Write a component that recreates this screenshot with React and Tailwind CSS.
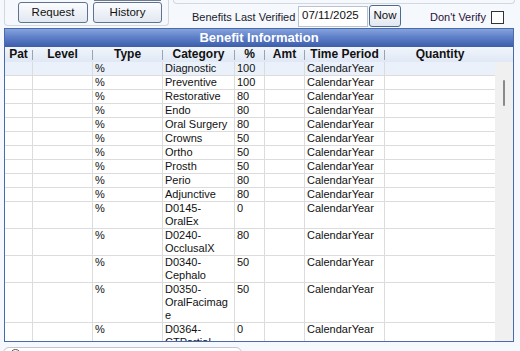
import React from "react";

const rows = [
  ["Diagnostic", "100"],
  ["Preventive", "100"],
  ["Restorative", "80"],
  ["Endo", "80"],
  ["Oral Surgery", "80"],
  ["Crowns", "50"],
  ["Ortho", "50"],
  ["Prosth", "50"],
  ["Perio", "80"],
  ["Adjunctive", "80"],
  ["D0145-OralEx", "0"],
  ["D0240-OcclusalX", "80"],
  ["D0340-Cephalo", "50"],
  ["D0350-OralFacimage", "50"],
  ["D0364-CTPartial", "0"],
];

function HeadCell({ w, label, sep = true }) {
  return (
    <div className={`flex items-center shrink-0 ${w}`}>
      <div className="flex-1 text-center">{label}</div>
      {sep && <div className="w-px h-[10px] bg-[#9aa3b3]" />}
    </div>
  );
}

function Row({ cat, pct, first }) {
  const cell = "shrink-0 border-r border-[#dcdcdc] pl-[2px]";
  return (
    <div className={`flex border-b border-[#dcdcdc] leading-[13px] ${first ? "bg-[#eaf1fb]" : "bg-white"}`}>
      <div className={`${cell} w-[28px]`} />
      <div className={`${cell} w-[60px]`} />
      <div className={`${cell} w-[70px]`}>%</div>
      <div className={`${cell} w-[72px] pr-[3px] break-words`}>{cat}</div>
      <div className={`${cell} w-[30px]`}>{pct}</div>
      <div className={`${cell} w-[40px]`} />
      <div className={`${cell} w-[80px]`}>CalendarYear</div>
      <div className="shrink-0 w-[110px]" />
    </div>
  );
}

export default function App() {
  return (
    <div className="w-[520px] h-[351px] overflow-hidden bg-[#f5f8fd] font-['Liberation_Sans',Arial,sans-serif] text-[11px] text-[#111]">
      {/* top area */}
      <div className="flex items-start h-[28px]">
        <div className="ml-[4px] w-[165px] h-[26px] border border-t-0 border-[#d3d8df] rounded-b-[4px] flex pl-[13px] gap-[5px] pt-[2px]">
          <button className="w-[70px] h-[21px] rounded-[3px] border border-[#5f7390] bg-linear-to-b from-[#fbfcfe] to-[#e1e8f1] text-[11.5px] text-[#111] leading-none">
            Request
          </button>
          <div className="flex flex-col -mt-[2px]">
            <div className="h-px mx-[1px] bg-[#6f7b8c]" />
            <button className="mt-[1px] w-[69px] h-[21px] rounded-[3px] border border-[#5f7390] bg-linear-to-b from-[#fbfcfe] to-[#e1e8f1] text-[11.5px] text-[#111] leading-none">
              History
            </button>
          </div>
        </div>
        <div className="ml-[4px] w-[342px] flex flex-col">
          <div className="h-[4px] border border-t-0 border-[#d3d8df] rounded-b-[4px]" />
          <div className="mt-[1px] flex items-center h-[22px]">
            <div className="ml-[19px] w-[106px] text-[#1a1a2e] mt-[2px]">Benefits Last Verified</div>
            <div className="w-[70px] h-[21px] border border-[#b9c3d0] bg-white flex items-center pl-[3px] text-[11.5px]">
              07/11/2025
            </div>
            <button className="ml-[1px] w-[32px] h-[22px] rounded-[3px] border border-[#4e6a8e] bg-linear-to-b from-[#fbfcfe] to-[#e1e8f1] text-[11.5px] leading-none text-[#111]">
              Now
            </button>
            <div className="ml-[29px] text-[#2a1038] mt-[2px]">Don't Verify</div>
            <div className="ml-[5px] mt-[3px] w-[13px] h-[13px] border border-[#333] bg-white" />
          </div>
        </div>
      </div>

      {/* table */}
      <div className="ml-[4px] w-[510px] border border-[#4a6aae] bg-white">
        <div className="h-[18px] bg-linear-to-b from-[#86a3dc] via-[#5b7cc6] to-[#3d5da9] text-white font-bold text-[13px] leading-[18px] text-center">
          Benefit Information
        </div>
        <div className="h-[15px] flex bg-linear-to-b from-[#f1f5fb] to-[#dfe8f5] font-bold text-[12px] leading-[15px] text-[#111]">
          <HeadCell w="w-[28px]" label="Pat" />
          <HeadCell w="w-[60px]" label="Level" />
          <HeadCell w="w-[70px]" label="Type" />
          <HeadCell w="w-[72px]" label="Category" />
          <HeadCell w="w-[30px]" label="%" />
          <HeadCell w="w-[40px]" label="Amt" />
          <HeadCell w="w-[80px]" label="Time Period" />
          <HeadCell w="w-[110px]" label="Quantity" sep={false} />
        </div>
        <div className="h-[279px] flex overflow-hidden">
          <div className="w-[490px] shrink-0 flex flex-col">
            {rows.map((r, i) => (
              <Row key={r[0]} cat={r[0]} pct={r[1]} first={i === 0} />
            ))}
          </div>
          <div className="w-[18px] shrink-0 bg-[#f0f0f0] pt-[18px] flex justify-center">
            <div className="w-[2px] h-[26px] bg-[#8a8a8a] rounded-full" />
          </div>
        </div>
      </div>

      {/* bottom partial box */}
      <div className="ml-[3px] mt-[5px] w-[239px] h-[20px] border border-[#c3c7cd] rounded-[6px] bg-white flex">
        <div className="ml-[6px] mt-[1px] w-[11px] h-[11px] rounded-full border border-[#555]" />
      </div>
    </div>
  );
}
